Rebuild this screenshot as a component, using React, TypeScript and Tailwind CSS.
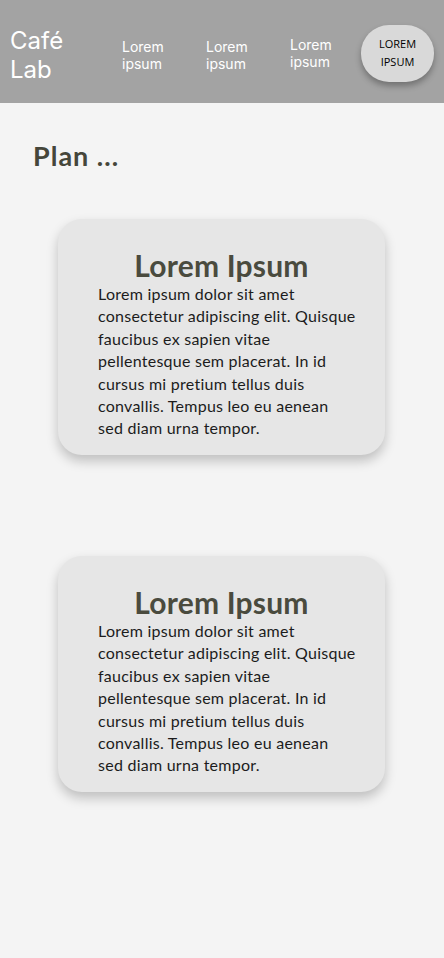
import React from "react";

const lines = [
  "Lorem ipsum dolor sit amet",
  "consectetur adipiscing elit. Quisque",
  "faucibus ex sapien vitae",
  "pellentesque sem placerat. In id",
  "cursus mi pretium tellus duis",
  "convallis. Tempus leo eu aenean",
  "sed diam urna tempor.",
];

const Card: React.FC = () => (
  <div className="w-[327px] h-[236px] rounded-[24px] bg-[#e6e6e6] shadow-[0_6px_12px_rgba(0,0,0,0.22)] pt-[28px] pl-[40px] pr-[10px]">
    <h2 className="text-center pr-[30px] text-[30px] leading-[36px] font-bold text-[#4a4b3e] tracking-[0.2px]">
      Lorem Ipsum
    </h2>
    <p className="text-[16px] leading-[22.4px] text-[#1c1c1c] tracking-[0.25px]">
      {lines.map((l) => (
        <span key={l} className="block whitespace-nowrap">
          {l}
        </span>
      ))}
    </p>
  </div>
);

const App: React.FC = () => {
  return (
    <div className="min-h-[958px] bg-[#f4f4f4] font-['Lato','Noto_Sans',sans-serif]">
      <header className="h-[103px] bg-[#a3a3a3] flex items-center pl-[10px] pr-[10px]">
        <div className="w-[112px] mt-[6px] text-white text-[24px] leading-[29px] font-['Inter',sans-serif] font-normal">
          Café
          <br />
          Lab
        </div>
        <nav className="flex items-center text-white text-[14px] leading-[17px] font-['Inter',sans-serif] font-normal">
          <a className="w-[84px] mt-[7px]">Lorem<br />ipsum</a>
          <a className="w-[84px] mt-[7px]">Lorem<br />ipsum</a>
          <a className="w-[71px] mt-[3px]">Lorem<br />ipsum</a>
        </nav>
        <button className="w-[73px] h-[57px] rounded-[28px] bg-[#d9d9d9] shadow-[0_4px_6px_rgba(0,0,0,0.3)] text-[11px] leading-[18px] text-black font-['Open_Sans',sans-serif] mt-[3px]">
          LOREM
          <br />
          IPSUM
        </button>
      </header>
      <main className="pl-[33px] pt-[36px]">
        <h1 className="text-[27px] leading-[34px] font-bold text-[#45463a] tracking-[1px]">Plan ...</h1>
        <div className="flex flex-col gap-[101px] pl-[25px] mt-[46px]">
          <Card />
          <Card />
        </div>
      </main>
    </div>
  );
};

export default App;
